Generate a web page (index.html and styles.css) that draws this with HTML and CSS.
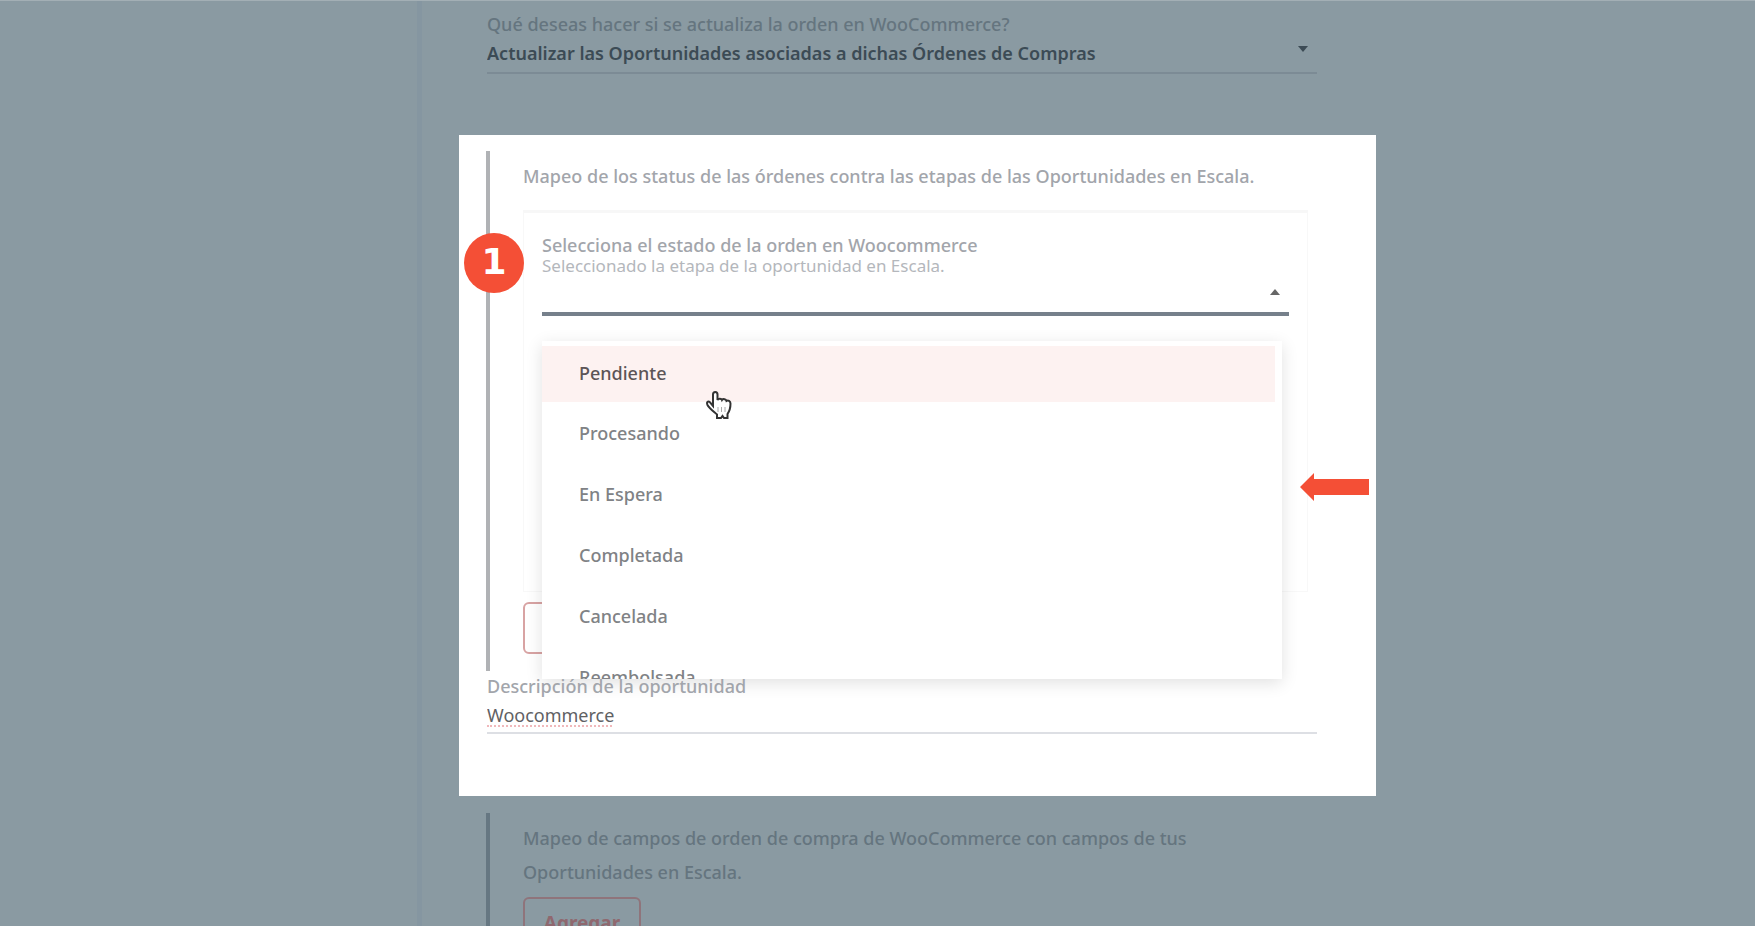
FILE: index.html
```
<!DOCTYPE html>
<html lang="es">
<head>
<meta charset="utf-8">
<title>WooCommerce - Escala</title>
<link rel="stylesheet" href="styles.css">
</head>
<body>
<div class="page">
  <aside class="sidebar"></aside>
  <main class="content">
    <section class="field field-top">
      <label class="label" for="update-action">Qué deseas hacer si se actualiza la orden en WooCommerce?</label>
      <div class="select-wrap">
        <select class="control control-strong" id="update-action">
          <option>Actualizar las Oportunidades asociadas a dichas Órdenes de Compras</option>
        </select>
        <svg class="caret" width="10" height="6" viewBox="0 0 10 6" aria-hidden="true"><path d="M0 0h10L5 6z"/></svg>
      </div>
    </section>

    <section class="spotlight">
      <div class="group group-status">
        <p class="group-title">Mapeo de los status de las órdenes contra las etapas de las Oportunidades en Escala.</p>
        <div class="card">
          <label class="label" for="order-state">Selecciona el estado de la orden en Woocommerce</label>
          <p class="hint" id="order-hint">Seleccionado la etapa de la oportunidad en Escala.</p>
          <div class="select-wrap">
            <select class="control control-open" id="order-state" aria-describedby="order-hint">
              <option></option>
            </select>
            <svg class="caret" width="10" height="6" viewBox="0 0 10 6" aria-hidden="true"><path d="M0 6h10L5 0z"/></svg>
            <ul class="menu" role="listbox" aria-label="Estado de la orden">
              <li class="option option-active" role="option" aria-selected="true">Pendiente</li>
              <li class="option" role="option">Procesando</li>
              <li class="option" role="option">En Espera</li>
              <li class="option" role="option">Completada</li>
              <li class="option" role="option">Cancelada</li>
              <li class="option" role="option">Reembolsada</li>
            </ul>
          </div>
        </div>
        <button class="button" type="button" aria-label="Agregar"></button>
      </div>
      <div class="field field-description">
        <label class="label" for="description">Descripción de la oportunidad</label>
        <div class="input-wrap">
          <input class="control control-input" id="description" type="text" value="Woocommerce">
          <span class="spelling"></span>
        </div>
      </div>
      <span class="badge">1</span>
      <svg class="arrow" width="69" height="28" viewBox="0 0 69 28" aria-hidden="true"><path d="M0 14L14 0v6h55v16H14v6z"/></svg>
      <svg class="pointer" width="28" height="30" viewBox="0 0 28 30" aria-hidden="true">
        <path d="M8 16V4.500C8 1 12.500 1 12.500 4.500V10c1-2 4-1.500 4.500 0 1-1.500 4-1 4.500 1 1.500-1 4 0 4 2.500 0 5-.5 7-3 10.500V28h-3.500l-1.500-2-1.500 2H12v-3.500C8 21 4 18 2.500 15 1 11.500 4 10.500 5.500 13z"/>
        <path class="pointer-lines" d="M13 17v5M16.500 17v5M20 17v5"/>
      </svg>
    </section>

    <section class="group group-fields">
      <p class="group-title group-title-narrow">Mapeo de campos de orden de compra de WooCommerce con campos de tus Oportunidades en Escala.</p>
      <button class="button" type="button">Agregar</button>
    </section>
  </main>
</div>
</body>
</html>
```
FILE: styles.css
```
* {
  box-sizing: border-box;
}

body {
  margin: 0;
  background: #8a9aa2;
  font-family: "Noto Sans", "Open Sans", sans-serif;
  font-size: 18px;
  line-height: 24px;
  color: #65757f;
}

p,
ul {
  margin: 0;
  padding: 0;
}

.page {
  display: grid;
  grid-template-columns: 422fr 954fr 379fr;
  height: 100vh;
  overflow: hidden;
  border-top: 1px solid #a3afb5;
}

.sidebar {
  border-right: 5px solid #8596a1;
}

.content {
  padding-left: 37px;
}

.label {
  display: block;
  font-weight: 500;
}

.select-wrap,
.input-wrap {
  position: relative;
}

.control {
  display: block;
  width: 100%;
  margin: 0;
  padding: 0;
  border: 0;
  border-radius: 0;
  outline: 0;
  appearance: none;
  background: transparent;
  color: inherit;
  font: inherit;
}

.caret {
  position: absolute;
  top: 10px;
  right: 9px;
  fill: currentColor;
}

.field-top {
  height: 134px;
  padding: 11px 59px 0 28px;
}

.field-top .select-wrap {
  color: #3c4b55;
}

.control-strong {
  height: 38px;
  padding-bottom: 2px;
  border-bottom: 2px solid #7c8b95;
  font-weight: 600;
}

.spotlight {
  position: relative;
  padding: 16px 59px 62px 27px;
  background: #fff;
  color: #a2a5ab;
}

.group {
  border-left: 4px solid #b0b2b5;
  padding-left: 33px;
}

.group-status {
  height: 520px;
  padding-top: 8px;
  padding-right: 9px;
}

.group-title {
  font-weight: 500;
  line-height: 34px;
}

.card {
  min-height: 382px;
  margin-top: 17px;
  padding: 20px 18px;
  border: 1px solid #f8f8f8;
  border-top: 3px solid #f7f7f7;
}

.hint {
  font-size: 17px;
  line-height: 18px;
  color: #b4b7bc;
}

.control-open {
  height: 41px;
  border-bottom: 4px solid #76808b;
}

.card .caret {
  top: 14px;
  fill: #666;
}

.menu {
  position: absolute;
  top: 66px;
  left: 0;
  right: 7px;
  height: 338px;
  padding-top: 5px;
  overflow: hidden;
  list-style: none;
  background: #fff;
  box-shadow: 0 4px 16px rgba(0, 0, 0, 0.12);
  color: #808285;
  font-weight: 500;
}

.option {
  height: 61px;
  padding: 0 37px;
  line-height: 52px;
}

.option-active {
  height: 56px;
  margin: 0 7px 5px 0;
  background: #fdf2f1;
  color: #5c5557;
  line-height: 54px;
}

.button {
  display: block;
  width: 118px;
  height: 52px;
  border: 2px solid #d8a3a3;
  border-radius: 6px;
  background: transparent;
  color: #8f686f;
  font: inherit;
  font-size: 19px;
  font-weight: 700;
}

.group-status .button {
  margin-top: 10px;
}

.field-description {
  position: relative;
  padding-left: 1px;
}

.field-description .label {
  padding-top: 3px;
}

.control-input {
  height: 36px;
  border-bottom: 2px solid #dddfe4;
  color: #5f6164;
}

.spelling {
  position: absolute;
  top: 27px;
  left: 0;
  width: 125px;
  border-bottom: 2px dotted #f0b8bb;
}

.badge {
  position: absolute;
  top: 98px;
  left: 5px;
  width: 60px;
  height: 60px;
  border-radius: 50%;
  background: #f44f36;
  color: #fff;
  font-family: "DejaVu Sans", sans-serif;
  font-size: 36px;
  font-weight: 700;
  line-height: 58px;
  text-align: center;
}

.arrow {
  position: absolute;
  top: 338px;
  right: 7px;
  fill: #f44f36;
}

.pointer {
  position: absolute;
  top: 255px;
  left: 246px;
  fill: #fff;
  stroke: #333;
  stroke-width: 2;
}

.pointer-lines {
  stroke: #aaa;
  stroke-width: 1;
}

.group-fields {
  margin: 17px 59px 0 27px;
  padding-top: 8px;
  border-left-color: #667782;
}

.group-title-narrow {
  max-width: 700px;
}

.group-fields .button {
  margin-top: 8px;
  border-color: #8f747b;
}
```
